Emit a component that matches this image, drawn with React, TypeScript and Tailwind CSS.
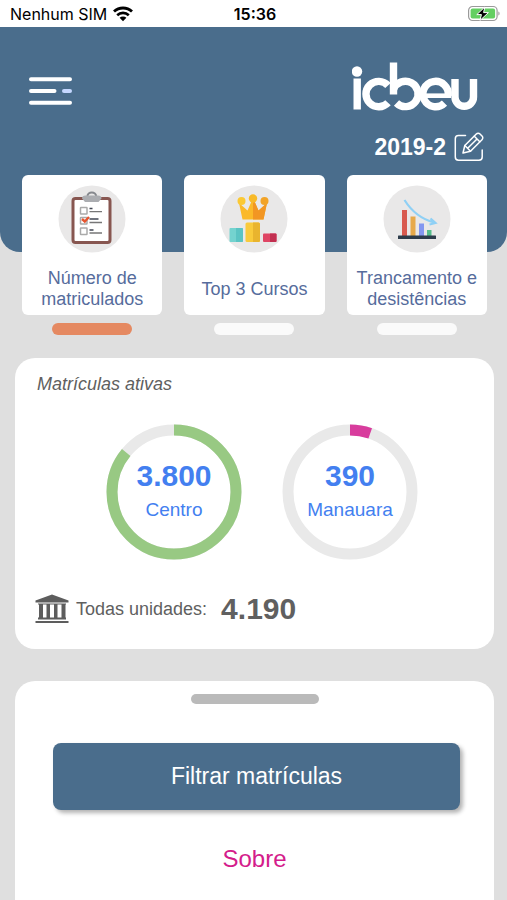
import React from "react";

const WifiIcon = () => (
  <svg className="h-[16px] w-[20px]" viewBox="0 0 20 16" fill="none" aria-hidden="true">
    <path d="M1 5.6a13 13 0 0 1 18 0" stroke="#000" strokeWidth="2.8" />
    <path d="M4.2 9.2a8.4 8.4 0 0 1 11.6 0" stroke="#000" strokeWidth="2.6" />
    <path d="M10 15.2l-3.4-3.4a4.8 4.8 0 0 1 6.8 0z" fill="#000" />
  </svg>
);

const BatteryIcon = () => (
  <svg className="h-[18px] w-[32px]" viewBox="0 0 32 18" aria-hidden="true">
    <rect x="0.6" y="1.5" width="28.5" height="14" rx="4" fill="#fff" stroke="#9a9a9a" strokeWidth="1.2" />
    <rect x="2.6" y="3.5" width="24.5" height="10" rx="2" fill="#63cf62" />
    <path d="M30.400 6.5c1.500.4 1.500 3.600 0 4z" fill="#9a9a9a" />
    <path d="M16.800 2L8.800 9.600h4.600L12 15.400l8.400-7.800h-4.800z" fill="#000" stroke="#fff" strokeWidth="1" />
  </svg>
);

const MenuIcon = () => (
  <svg className="h-[30px] w-[44px]" viewBox="0 0 44 30" fill="none" strokeWidth="4" strokeLinecap="round" aria-hidden="true">
    <path d="M3 3.300h39M3 15h23.500M3 26.700h39" stroke="#fff" />
    <path d="M36 15h6" stroke="#c5d7ff" />
  </svg>
);

const Logo = () => (
  <svg className="h-[50px] w-[126px]" viewBox="0 0 126 50" fill="none" stroke="#fff" strokeWidth="7.400" role="img" aria-label="icbeu">
    <circle cx="5" cy="9.500" r="5.200" fill="#fff" stroke="none" />
    <path d="M5.200 16.500V47.500" />
    <path d="M36 23.500a12.700 12.700 0 1 0 0 17.200" />
    <path d="M41.500 .5V32.500" />
    <path d="M41.500 27.500a12.700 12.700 0 1 1 3 13.500" />
    <path d="M96.200 33.600a12.700 12.700 0 1 0-3.700 7.500" />
    <path d="M70 33.700h29" strokeWidth="4.600" />
    <path d="M103 17V35a9.250 9.250 0 0 0 18.500 0V17" />
  </svg>
);

const EditIcon = () => (
  <svg className="h-[30px] w-[30px]" viewBox="0 0 30 30" fill="none" stroke="#fff" strokeWidth="1.5" strokeLinecap="round" strokeLinejoin="round" aria-hidden="true">
    <path d="M11.500 3.500H4.500A3.200 3.200 0 0 0 1.300 6.700V25A3.200 3.200 0 0 0 4.500 28.200H25A3.200 3.200 0 0 0 28.200 25V18" />
    <path d="M9 21l1.800-7.500L22.300 2a2.600 2.600 0 0 1 3.700 0l2 2a2.600 2.600 0 0 1 0 3.700L16.500 19.200z" />
    <path d="M20.300 4.300l5.500 5.500M10.800 13.500l5.700 5.700M23 7L13.700 16.300" />
  </svg>
);

const ClipboardArt = () => (
  <>
    <rect x="15" y="13.500" width="37" height="44" rx="2.500" fill="#fff" stroke="#875650" strokeWidth="3" />
    <path d="M29.500 11a4.300 3.500 0 0 1 8.600 0" fill="none" stroke="#85888d" strokeWidth="2" />
    <path d="M24 13.500q0-3 3.500-3h12.500q3.500 0 3.500 3l-3 3.500H27z" fill="#abadb1" />
    <g fill="none" stroke="#aaa" strokeWidth="1.500">
      <rect x="22.500" y="22.500" width="6.500" height="6.500" rx="0.500" />
      <rect x="22.500" y="32.500" width="6.500" height="6.500" rx="0.500" />
      <rect x="22.500" y="43" width="6.500" height="6.500" rx="0.500" />
    </g>
    <path d="M31.500 23.500h3M31.500 34h9M31.500 45h4" stroke="#424754" strokeWidth="1.600" />
    <path d="M31.500 26.700h12.500M31.500 37.500h12.500M31.500 48h12.500" stroke="#777" strokeWidth="1.300" />
    <path d="M24 34l2.800 2.500 4.200-4.500" fill="none" stroke="#e6552f" strokeWidth="2.400" />
  </>
);

const PodiumArt = () => (
  <>
    <rect x="9.500" y="43" width="13.500" height="14" rx="1" fill="#74d3cf" />
    <path d="M16 43h6a1 1 0 0 1 1 1v12a1 1 0 0 1-1 1h-6z" fill="#5bc4c3" />
    <rect x="25.500" y="37.500" width="14.500" height="19.500" rx="1.500" fill="#f9ca3b" />
    <path d="M33 37.500h5.500a1.500 1.500 0 0 1 1.500 1.500v16.500a1.500 1.500 0 0 1-1.500 1.500H33z" fill="#e9b42e" />
    <rect x="43" y="48.500" width="13.500" height="8.500" rx="1" fill="#df4564" />
    <path d="M50 48.500h5.500a1 1 0 0 1 1 1v6.500a1 1 0 0 1-1 1H50z" fill="#c22f50" />
    <path d="M22.500 34.500L19 18l8.500 7.500L33 13l5.500 12.500L47 18l-3.500 16.500z" fill="#fbb929" />
    <path d="M33 13l5.500 12.500L47 18l-3.500 16.500H33z" fill="#f29623" />
    <circle cx="21.500" cy="16" r="4" fill="#fbc934" />
    <circle cx="33" cy="13.500" r="4.200" fill="#f8ba28" />
    <circle cx="44.500" cy="16" r="4" fill="#f2a326" />
  </>
);

const DeclineArt = () => (
  <>
    <path d="M19 25h5v26h-5z" fill="#d85a50" />
    <path d="M27.500 31.500h5V51h-5z" fill="#e7aa4b" />
    <path d="M36 38.500h5V51h-5z" fill="#8397f0" />
    <path d="M44 45h4.500v6H44z" fill="#55bd8c" />
    <rect x="15" y="50.500" width="38" height="3.500" rx="0.500" fill="#2d3c4b" />
    <path d="M21.500 15q11 17.500 29.500 22.500M47.500 33.500l5 4.500-6 1.500" fill="none" stroke="#8fd0f5" strokeWidth="2.200" />
  </>
);

const tabs = [
  { label: "Número de matriculados", art: <ClipboardArt />, active: true },
  { label: "Top 3 Cursos", art: <PodiumArt />, active: false },
  { label: "Trancamento e desistências", art: <DeclineArt />, active: false },
];

const units = [
  { name: "Centro", total: "3.800", percent: 86, color: "#98c983" },
  { name: "Manauara", total: "390", percent: 5.3, color: "#d83c9d" },
];

interface DonutProps {
  name: string;
  total: string;
  percent: number;
  color: string;
}

const Donut = ({ name, total, percent, color }: DonutProps) => (
  <div className="grid h-[136px] w-[136px] place-items-center">
    <svg className="col-start-1 row-start-1 h-full w-full -rotate-90" viewBox="0 0 136 136" fill="none" strokeWidth="11" aria-hidden="true">
      <circle cx="68" cy="68" r="62" stroke="#e9e9e9" />
      <circle cx="68" cy="68" r="62" stroke={color} pathLength="100" strokeDasharray={`${percent} 100`} />
    </svg>
    <div className="col-start-1 row-start-1 text-center text-[#437ff0]">
      <p className="text-[30px] leading-9 font-bold">{total}</p>
      <p className="text-[19px] leading-8">{name}</p>
    </div>
  </div>
);

export default function App() {
  return (
    <div className="flex min-h-screen flex-col bg-[#dfdfdf] font-['Liberation_Sans',Arial,sans-serif]">
      <div className="grid h-[27px] grid-cols-3 items-center bg-white pr-[7px] pl-[10px] font-['Inter',sans-serif] text-base text-black">
        <div className="flex items-center gap-[6px] whitespace-nowrap">
          <span>Nenhum SIM</span>
          <WifiIcon />
        </div>
        <span className="text-center font-semibold">15:36</span>
        <div className="flex justify-end">
          <BatteryIcon />
        </div>
      </div>

      <header className="flex items-start justify-between rounded-b-[20px] bg-[#4a6d8c] pt-[35px] pr-[23px] pb-[90px] pl-7 text-white">
        <button type="button" aria-label="Menu" className="mt-[14px]">
          <MenuIcon />
        </button>
        <div className="flex flex-col items-end gap-[20px]">
          <div className="pr-[6px]">
            <Logo />
          </div>
          <button type="button" className="flex items-center gap-2 text-[23px] leading-[30px] font-bold">
            2019-2
            <EditIcon />
          </button>
        </div>
      </header>

      <nav className="-mt-[77px] grid grid-cols-3 gap-[22px] pr-5 pl-[22px]">
        {tabs.map((tab) => (
          <div key={tab.label} className="flex flex-col items-center gap-2">
            <button
              type="button"
              className="flex h-[140px] w-full flex-col items-center rounded-md bg-white pt-[10px] text-[18px] leading-[21px] text-[#566c9c]"
            >
              <svg className="h-[68px] w-[68px] shrink-0" viewBox="0 0 68 68" aria-hidden="true">
                <circle cx="34" cy="34" r="33.500" fill="#e9e8e8" />
                {tab.art}
              </svg>
              <span className="flex flex-1 items-center pt-[10px]">{tab.label}</span>
            </button>
            <div className={`h-3 w-20 rounded-full ${tab.active ? "bg-[#e58961]" : "bg-[#fafafa]"}`} />
          </div>
        ))}
      </nav>

      <main className="mt-[23px] flex w-full flex-1 flex-col gap-8 pr-[13px] pl-[15px]">
        <section className="rounded-[20px] bg-white px-5 pt-[14px] pb-[22px]">
          <h2 className="pl-0.5 text-[18px] leading-6 text-[#606060] italic">Matrículas ativas</h2>
          <div className="mt-7 flex justify-center gap-10 pl-[15px]">
            {units.map((unit) => (
              <Donut key={unit.name} {...unit} />
            ))}
          </div>
          <div className="mt-[31px] flex items-center text-[#606060]">
            <svg className="h-[30px] w-[34px]" viewBox="0 0 34 30" fill="#5d5d5d" aria-hidden="true">
              <path d="M17 .5L33.500 6.500V8.500H.5V6.500z" />
              <path d="M4 10h4v14H4zM11.500 10h3.500v14h-3.500zM19 10h3.500v14H19zM26.500 10h4v14h-4z" />
              <path d="M3 9.500h28v1H3zM3 23.500h28V25.500H3zM.5 27h33v2H.5z" />
            </svg>
            <span className="ml-[7px] text-[18px]">Todas unidades:</span>
            <strong className="ml-[14px] text-[30px] leading-9">4.190</strong>
          </div>
        </section>

        <section className="flex flex-1 flex-col items-center rounded-t-[20px] bg-white pt-[13px] pb-6">
          <div className="h-[10px] w-32 rounded-full bg-[#bababa]" />
          <button
            type="button"
            className="mt-[39px] mr-[34px] ml-[38px] h-[67px] self-stretch rounded-lg bg-[#4a6d8c] text-[23px] text-white shadow-[3px_3px_4px_rgba(0,0,0,0.3)]"
          >
            Filtrar matrículas
          </button>
          <a href="#sobre" className="mt-[31px] text-[24px] leading-9 text-[#d41c8b]">
            Sobre
          </a>
        </section>
      </main>
    </div>
  );
}
